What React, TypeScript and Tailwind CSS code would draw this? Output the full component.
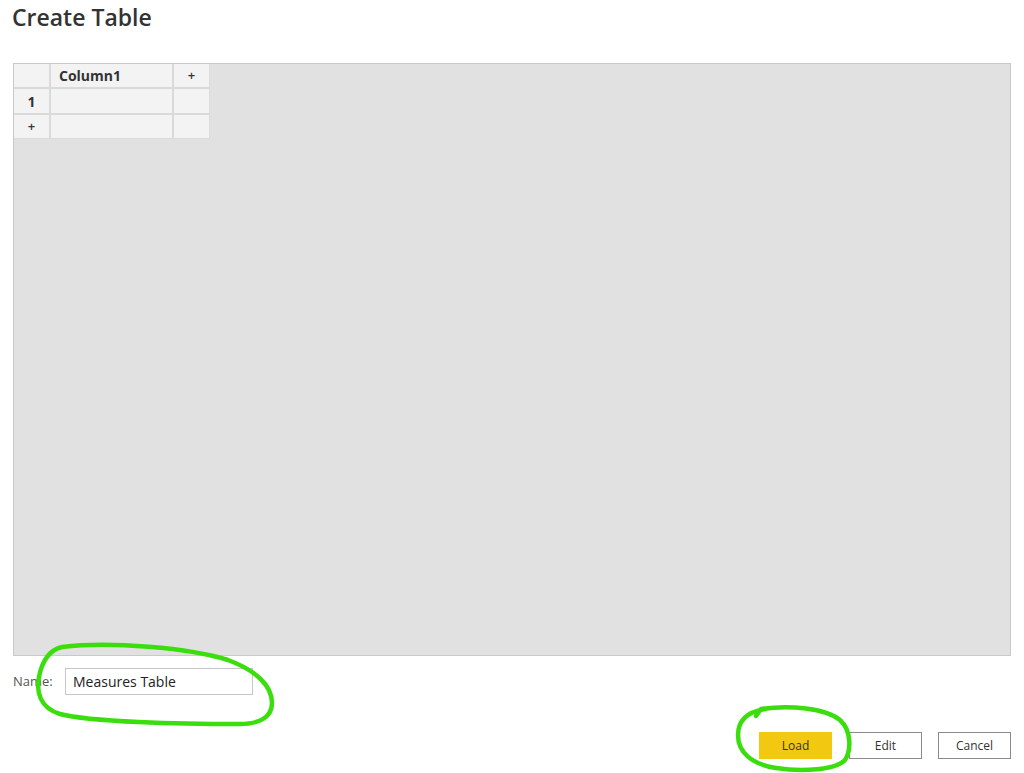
import React from 'react';

const font = { fontFamily: '"Open Sans", "Noto Sans", sans-serif' };

const Cell = ({ children, className = '' }: { children?: React.ReactNode; className?: string }) => (
  <div className={`flex items-center justify-center bg-[#f3f3f3] text-[13px] font-bold text-[#333] ${className}`}>
    {children}
  </div>
);

const App = () => {
  return (
    <div className="relative w-[1024px] h-[773px] bg-white overflow-hidden" style={font}>
      {/* Title */}
      <h1 className="pl-[12px] pt-[2px] h-[63px] text-[23px] leading-[30px] font-semibold text-[#333]">
        Create Table
      </h1>

      {/* Table editor panel */}
      <div className="ml-[13px] w-[998px] h-[593px] bg-[#e1e1e1] border border-[#c9c9c9]">
        <div className="inline-grid grid-cols-[35px_121px_35px] grid-rows-[23px_24px_23px] gap-[2px] bg-[#dadada] pr-px pb-px">
          <Cell />
          <Cell className="justify-start pl-[8px] text-[14px]">Column1</Cell>
          <Cell className="font-semibold">+</Cell>
          <Cell className="text-[14px]">1</Cell>
          <Cell className="bg-[#e9e9e9]" />
          <Cell />
          <Cell className="font-semibold">+</Cell>
          <Cell />
          <Cell />
        </div>
      </div>

      {/* Name row */}
      <div className="flex items-center mt-[12px] pl-[13px] h-[27px]">
        <span className="w-[52px] text-[13px] text-[#555]">Name:</span>
        <input
          readOnly
          value="Measures Table"
          className="w-[188px] h-[27px] px-[7px] border border-[#c6c6c6] bg-white text-[14px] text-[#222] outline-none"
          style={font}
        />
      </div>

      {/* Buttons */}
      <div className="flex justify-end items-center mt-[37px] pr-[13px]">
        <button className="w-[73px] h-[27px] bg-[#f2c811] text-[12px] text-[#333]" style={font}>Load</button>
        <button className="ml-[17px] w-[73px] h-[27px] bg-white border border-[#8a8a8a] text-[12px] text-[#333]" style={font}>Edit</button>
        <button className="ml-[16px] w-[73px] h-[27px] bg-white border border-[#8a8a8a] text-[12px] text-[#333]" style={font}>Cancel</button>
      </div>

      {/* Hand-drawn annotations */}
      <svg className="absolute inset-0 pointer-events-none" width="1024" height="773" fill="none">
        <path
          d="M62 647 C110 641, 190 648, 228 660 C255 670, 272 685, 272 703 C272 718, 258 724, 240 724 C180 724, 90 722, 60 714 C40 708, 36 692, 39 677 C42 661, 50 650, 62 647"
          stroke="#3ade0c"
          strokeWidth="4.5"
          strokeLinecap="round"
          strokeLinejoin="round"
        />
        <path
          d="M756 716 L761 709 C790 705, 825 708, 840 720 C852 731, 851 751, 845 760 C836 770, 802 772, 776 768 C751 764, 738 752, 738 735 C738 722, 745 712, 766 709"
          stroke="#3ade0c"
          strokeWidth="4.5"
          strokeLinecap="round"
          strokeLinejoin="round"
        />
      </svg>
    </div>
  );
};

export default App;
